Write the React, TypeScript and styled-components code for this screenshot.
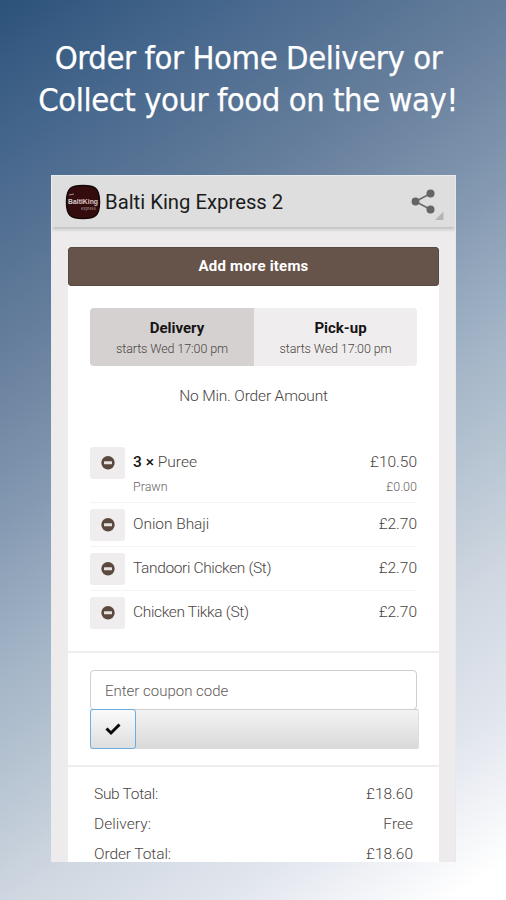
import React from 'react';
import styled, { createGlobalStyle } from 'styled-components';

const Global = createGlobalStyle`
  * { box-sizing: border-box; }
  body { margin: 0; }
`;

const Poster = styled.main`
  width: 506px;
  height: 900px;
  overflow: hidden;
  padding-top: 37px;
  background: linear-gradient(146deg, #2c5279 0%, #41638a 10%, #647d9b 27.5%, #8297b0 41%, #a5b6c8 55%, #b9c6d3 64%, #cfd7e1 73%, #e2e6ee 85%, #ffffff 97%);
  font-family: Roboto, "Liberation Sans", sans-serif;
`;

const Headline = styled.h1`
  margin: 0 0 54px;
  height: 84px;
  display: flex;
  flex-direction: column;
  align-items: center;
  font: 400 32.5px/42px "DejaVu Sans Condensed", "DejaVu Sans", sans-serif;
  font-stretch: condensed;
  color: #fff;
  -webkit-text-stroke: 0.25px #fff;
  white-space: nowrap;
`;

const HeadlineRow = styled.span<{ $gap: number; $shift: number }>`
  letter-spacing: ${(p) => p.$gap}px;
  margin-left: ${(p) => p.$shift}px;
`;

const Phone = styled.section`
  width: 405px;
  height: 687px;
  margin-left: 51px;
  overflow: hidden;
  background: #edebeb;
  border-left: 1px solid #e6edf2;
  border-right: 1px solid #e4e9ee;
`;

const AppBar = styled.header`
  height: 52px;
  display: flex;
  align-items: center;
  padding: 0 11px 0 13px;
  background: #dedede;
  border-top: 1px solid #e8ebee;
  box-shadow: 0 2px 4px rgba(0, 0, 0, 0.22);
`;

const Title = styled.h2`
  flex: 1;
  margin: 1px 0 0 4px;
  font-size: 20.3px;
  font-weight: 400;
  color: #1c1c1c;
  white-space: nowrap;
`;

const Card = styled.div`
  width: 371px;
  margin: 20px 0 0 16px;
  background: #fff;
`;

const AddButton = styled.button`
  display: block;
  width: 100%;
  height: 39px;
  padding: 0;
  border: 1px solid #5b4a41;
  border-radius: 3px;
  background: #66534a;
  color: #fff;
  font: 700 15px/37px Roboto, sans-serif;
  letter-spacing: 0.2px;
`;

const Section = styled.section<{ $height: number; $top: number }>`
  height: ${(p) => p.$height}px;
  padding: ${(p) => p.$top}px 22px 0;
  border-bottom: 2px solid #efeded;
`;

const Toggle = styled.div`
  display: grid;
  grid-template-columns: 164px 163px;
  height: 58px;
  border-radius: 4px;
  overflow: hidden;
`;

const Option = styled.button<{ $active?: boolean }>`
  border: 0;
  padding: 9px 0 0;
  display: flex;
  flex-direction: column;
  align-items: center;
  background: ${(p) => (p.$active ? '#d5d1d0' : '#efeded')};
`;

const Label = styled.span<{ $size: number; $color?: string; $weight?: number; $gap?: number; $line?: number }>`
  font-family: Roboto, sans-serif;
  font-size: ${(p) => p.$size}px;
  line-height: ${(p) => p.$line ?? 22}px;
  font-weight: ${(p) => p.$weight ?? 300};
  letter-spacing: ${(p) => p.$gap ?? 0}px;
  color: ${(p) => p.$color ?? '#4a4442'};
  white-space: nowrap;
`;

const OptionName = styled(Label)`
  padding-left: 10px;
`;

const Notice = styled.p`
  margin: 19px 0 39px;
  height: 23px;
  text-align: center;
`;

const Item = styled.div<{ $height: number }>`
  height: ${(p) => p.$height}px;
  display: grid;
  grid-template-columns: 35px 1fr auto;
  column-gap: 8px;
  align-content: start;
  border-bottom: 1px solid #f4f2f2;
  &:last-child { border-bottom: 0; }
`;

const RemoveButton = styled.button`
  height: 32px;
  padding: 0;
  border: 0;
  border-radius: 3px;
  background: #efeded;
  display: grid;
  place-items: center;
`;

const Extra = styled.div`
  grid-column: 2 / 4;
  display: flex;
  justify-content: space-between;
  height: 16px;
`;

const Coupon = styled.input`
  display: block;
  width: 327px;
  height: 40px;
  padding: 2px 14px 0;
  border: 1.5px solid #cfcfcf;
  border-radius: 4px;
  outline: 0;
  background: #fff;
  font: 300 15px Roboto, sans-serif;
  &::placeholder { color: #5f5957; opacity: 1; }
`;

const ApplyBar = styled.div`
  width: 329px;
  height: 40px;
  margin-top: -1px;
  background: linear-gradient(#f3f3f3, #d9d9d9);
  border-top: 1px solid #cfcfcf;
  border-right: 1px solid #dedede;
  border-radius: 2px;
`;

const ApplyButton = styled.button`
  width: 46px;
  height: 40px;
  margin-top: -1px;
  padding: 0;
  display: grid;
  place-items: center;
  border: 1.5px solid #69afe0;
  border-radius: 3px;
  background: linear-gradient(#fafafa, #dedede);
`;

const TotalRow = styled.div`
  height: 30px;
  padding: 0 4px;
  display: flex;
  justify-content: space-between;
`;

const LogoText = styled.text`
  font-family: "Liberation Sans", sans-serif;
  font-weight: 700;
`;

const Logo = () => (
  <svg width="36" height="36" viewBox="0 0 36 36">
    <path d="M18 1.500C30 1.500 34.500 4 34.500 18S30 34.500 18 34.500 1.500 32 1.500 18 6 1.500 18 1.500Z" fill="#350c0d" stroke="#160707" strokeWidth="1.500" />
    <path d="M4 11l5-1" stroke="#a58c8c" strokeWidth="1" />
    <LogoText x="3" y="20" fontSize="7" textLength="30" lengthAdjust="spacingAndGlyphs" fill="#d8caca">BaltiKing</LogoText>
    <LogoText x="16" y="26" fontSize="5.500" textLength="15" lengthAdjust="spacingAndGlyphs" fill="#8f7474">express</LogoText>
  </svg>
);

const ShareIcon = () => (
  <svg width="34" height="36" viewBox="0 0 34 36">
    <path d="M20.500 9.500L5.500 17.500l15 8" fill="none" stroke="#6c6c6c" strokeWidth="1.700" />
    <g fill="#656565">
      <circle cx="5.500" cy="17.500" r="3.900" />
      <circle cx="20.500" cy="9.500" r="4" />
      <circle cx="20.500" cy="25.500" r="4" />
    </g>
    <path d="M33.500 27.500V36H25z" fill="#b4b4b4" />
  </svg>
);

const MinusIcon = () => (
  <svg width="14" height="14" viewBox="0 0 14 14">
    <circle cx="7" cy="6.700" r="6.700" fill="#5b493f" />
    <rect x="3" y="5.200" width="8" height="3" rx="0.500" fill="#e9e3e0" />
  </svg>
);

const CheckIcon = () => (
  <svg width="16" height="14" viewBox="0 0 16 14">
    <path d="M1.500 6.500l4.500 4.500L14.500 2.500" fill="none" stroke="#090909" strokeWidth="3" />
  </svg>
);

const items = [
  { name: 'Puree', count: '3 ×', price: '£10.50', extra: 'Prawn', extraPrice: '£0.00', height: 56, gap: 0 },
  { name: 'Onion Bhaji', price: '£2.70', height: 38, gap: -0.05 },
  { name: 'Tandoori Chicken (St)', price: '£2.70', height: 38, gap: -0.36 },
  { name: 'Chicken Tikka (St)', price: '£2.70', height: 38, gap: -0.34 },
];

const ItemList = styled.div`
  display: flex;
  flex-direction: column;
  gap: 6px;
`;

const Count = styled.b`
  font-weight: 500;
  color: #151515;
`;

const totals = [
  { name: 'Sub Total:', value: '£18.60', gap: -0.3 },
  { name: 'Delivery:', value: 'Free', gap: 0.05 },
  { name: 'Order Total:', value: '£18.60', gap: -0.1 },
];

export default function App() {
  return (
    <Poster>
      <Global />
      <Headline>
        <HeadlineRow $gap={-0.4} $shift={-9}>Order for Home Delivery or</HeadlineRow>
        <HeadlineRow $gap={-0.44} $shift={-10}>Collect your food on the way!</HeadlineRow>
      </Headline>
      <Phone>
        <AppBar>
          <Logo />
          <Title>Balti King Express 2</Title>
          <ShareIcon />
        </AppBar>
        <Card>
          <AddButton>Add more items</AddButton>
          <Section $height={367} $top={22}>
            <Toggle>
              <Option $active>
                <OptionName $size={15} $weight={700} $color="#161414">Delivery</OptionName>
                <Label $size={12.5} $line={20} $gap={-0.1}>starts Wed 17:00 pm</Label>
              </Option>
              <Option>
                <OptionName $size={15} $weight={700} $color="#161414">Pick-up</OptionName>
                <Label $size={12.5} $line={20} $gap={-0.1}>starts Wed 17:00 pm</Label>
              </Option>
            </Toggle>
            <Notice><Label $size={15.5} $gap={-0.15}>No Min. Order Amount</Label></Notice>
            <ItemList>
              {items.map((item) => (
                <Item key={item.name} $height={item.height}>
                  <RemoveButton><MinusIcon /></RemoveButton>
                  <Label $size={15.5} $line={30} $gap={item.gap}>{item.count && <Count>{item.count} </Count>}{item.name}</Label>
                  <Label $size={15.5} $line={30}>{item.price}</Label>
                  {item.extra && (
                    <Extra>
                      <Label $size={12.5} $line={16} $color="#6b6563">{item.extra}</Label>
                      <Label $size={12.5} $line={16} $color="#6b6563">{item.extraPrice}</Label>
                    </Extra>
                  )}
                </Item>
              ))}
            </ItemList>
          </Section>
          <Section $height={114} $top={17}>
            <Coupon placeholder="Enter coupon code" />
            <ApplyBar><ApplyButton><CheckIcon /></ApplyButton></ApplyBar>
          </Section>
          <Section $height={110} $top={16}>
            {totals.map((row) => (
              <TotalRow key={row.name}>
                <Label $size={15.5} $gap={row.gap}>{row.name}</Label>
                <Label $size={15.5}>{row.value}</Label>
              </TotalRow>
            ))}
          </Section>
        </Card>
      </Phone>
    </Poster>
  );
}
